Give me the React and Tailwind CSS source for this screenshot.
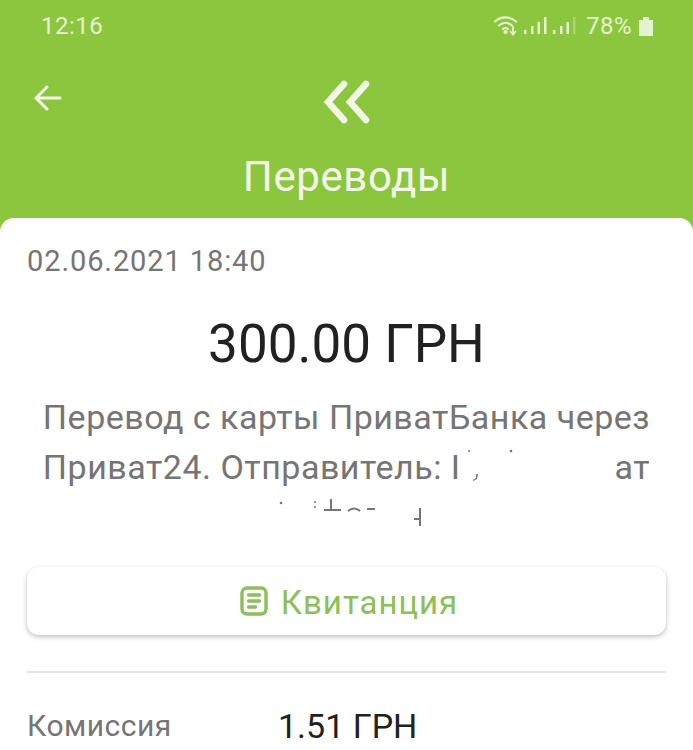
const SignalBars = ({ dim }) => (
  <svg width="28" height="22" viewBox="0 0 28 22" fill="#e4f2d0">
    <rect x="1" y="15" width="2.5" height="4" />
    <rect x="8" y="11" width="2.5" height="8" />
    <rect x="14.5" y="7" width="2.5" height="12" />
    <rect x="21" y="2" width="2.5" height="17" opacity={dim ? 0.35 : 1} />
  </svg>
);

const StatusBar = () => (
  <div className="w-full flex items-center justify-between h-[52px] pl-[41px] pr-[40px] text-[#e6f3d3] text-[24px] tracking-[0.5px]">
    <span>12:16</span>
    <div className="flex items-center">
      <svg width="28" height="24" viewBox="0 0 28 24" fill="none" stroke="#e4f2d0" strokeWidth="2.2" strokeLinecap="round">
        <path d="M2 7.5C8 2 17 2 23 7.5" />
        <path d="M6 11.5C10 8 15 8 19 11.5" />
        <path d="M10 15C11.5 13.6 13.5 13.6 15 15" />
        <circle cx="12.5" cy="18" r="1" fill="#e4f2d0" />
        <path d="M20 13V20M17.5 17.5L20 20.5L22.5 17.5" strokeWidth="1.8" />
      </svg>
      <div className="ml-[2px] flex items-center gap-[1px]">
        <SignalBars />
        <SignalBars dim />
      </div>
      <span className="ml-[6px]">78%</span>
      <div className="ml-[7px] flex flex-col items-center">
        <div className="w-[6px] h-[3px] bg-[#e4f2d0]" />
        <div className="w-[14px] h-[16px] bg-[#e4f2d0]" />
      </div>
    </div>
  </div>
);

const Header = () => (
  <div className="relative flex flex-col items-center h-[218px] bg-[#8cc63f]">
    <StatusBar />
    <svg className="absolute left-[33px] top-[84px]" width="29" height="28" viewBox="0 0 29 28" fill="none" stroke="#f3f9ea" strokeWidth="3" strokeLinecap="round" strokeLinejoin="round">
      <path d="M27 14H3M14 3L3 14L14 25" />
    </svg>
    <svg className="mt-[28px]" width="50" height="44" viewBox="0 0 50 44" fill="none" stroke="#f1f8e6" strokeWidth="6.5" strokeLinecap="round" strokeLinejoin="miter">
      <path d="M22 4L6 22L22 40" />
      <path d="M44 4L28 22L44 40" />
    </svg>
    <div className="mt-[28px] text-[42px] leading-[50px] text-[#f3f9ea] tracking-[0.6px]">Переводы</div>
  </div>
);

function Receipt() {
  return (
    <button className="w-full h-[68px] flex items-center justify-center gap-[13px] pl-[5px] bg-white rounded-[12px] shadow-[0_2px_5px_rgba(0,0,0,0.25)]">
      <svg width="28" height="32" viewBox="0 0 28 32" fill="none" stroke="#8cbf56" strokeWidth="3.4" strokeLinecap="round">
        <rect x="2" y="3" width="24" height="26" rx="5" />
        <path d="M8.5 10H19.5M8.5 16H19.5M8.5 22H15.5" />
      </svg>
      <span className="pt-[4px] text-[33px] text-[#8cbf56] tracking-[1px]">Квитанция</span>
    </button>
  );
}

export default function App() {
  return (
    <div className="w-[693px] h-[750px] overflow-hidden bg-[#8cc63f] font-['Roboto',sans-serif]">
      <Header />
      <div className="h-[532px] bg-white rounded-t-[14px] px-[27px]">
        <div className="pt-[24px] text-[29px] leading-[38px] text-[#757575] tracking-[0.9px]">02.06.2021 18:40</div>
        <div className="mt-[33px] text-center text-[53px] leading-[62px] text-[#212121]">300.00 ГРН</div>
        <div className="mt-[17px] text-center text-[34px] leading-[50px] text-[#757575] tracking-[0.5px]">
          <div className="whitespace-nowrap">Перевод с карты ПриватБанка через</div>
          <div className="relative whitespace-nowrap">
            Приват24. Отправитель: І<span className="inline-block w-[154px]" />ат
            <svg className="absolute left-[437px] top-[5px]" width="50" height="40" viewBox="0 0 50 40" fill="#757575">
              <circle cx="5" cy="4" r="1" />
              <circle cx="47" cy="4" r="1.3" />
              <path d="M14 27L13 32L9 34L9 33L12 31L12 27Z" />
            </svg>
          </div>
          <div className="h-[50px]">
            <svg className="ml-[250px] mt-[7px]" width="150" height="32" viewBox="0 0 150 32" fill="none" stroke="#757575" strokeWidth="2">
              <circle cx="4" cy="4" r="1.3" fill="#757575" stroke="none" />
              <circle cx="38" cy="3" r="1" fill="#757575" stroke="none" />
              <circle cx="38" cy="8" r="1" fill="#757575" stroke="none" />
              <path d="M54 0V12M47 11H64" />
              <path d="M71 12Q77 7 83 12" />
              <path d="M90 10H98" />
              <path d="M143 9V27M137 20H143" />
            </svg>
          </div>
        </div>
        <div className="mt-[18px]">
          <Receipt />
        </div>
        <div className="mt-[36px] border-t-2 border-[#e4e4e4]" />
        <div className="mt-[33px] flex items-center">
          <span className="w-[251px] text-[30px] leading-[40px] text-[#757575] tracking-[0.5px]">Комиссия</span>
          <span className="text-[34px] leading-[40px] text-[#212121]">1.51 ГРН</span>
        </div>
      </div>
    </div>
  );
}
